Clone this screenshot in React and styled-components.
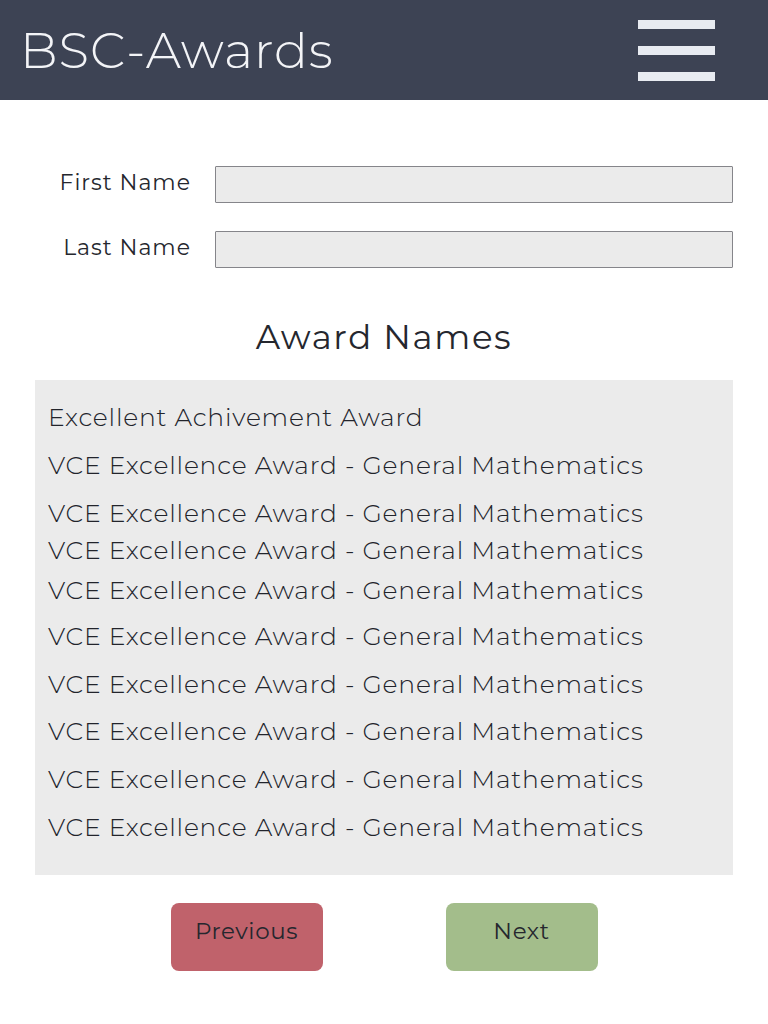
import React from 'react';
import styled, { createGlobalStyle } from 'styled-components';

const GlobalStyle = createGlobalStyle`
  body {
    margin: 0;
    background: #fff;
    font-family: Montserrat, "Open Sans", "Liberation Sans", sans-serif;
    color: #25272e;
  }
`;

const Header = styled.header`
  height: 100px;
  background: #3d4354;
  display: flex;
  align-items: center;
  justify-content: space-between;
  padding: 0 53px 0 20px;
`;

const Title = styled.h1`
  margin: 0;
  font-size: 50px;
  font-weight: 300;
  letter-spacing: 1px;
  color: #f3f4f7;
`;

const MenuButton = styled.button`
  display: flex;
  flex-direction: column;
  gap: 17px;
  width: 77px;
  padding: 0;
  border: none;
  background: none;
  cursor: pointer;
`;

const Bar = styled.span`
  display: block;
  height: 9px;
  background: #e8ebf1;
`;

const Form = styled.form`
  display: grid;
  grid-template-columns: 191px 1fr;
  column-gap: 24px;
  row-gap: 28px;
  align-items: center;
  padding: 66px 35px 0 0;
`;

const Label = styled.label`
  text-align: right;
  font-size: 22px;
  font-weight: 400;
  letter-spacing: 1px;
  padding-bottom: 4px;
`;

const Input = styled.input`
  box-sizing: border-box;
  height: 37px;
  width: 100%;
  background: #ebebeb;
  border: 1.5px solid #85858a;
  border-radius: 1px;
`;

const Heading = styled.h2`
  margin: 48px 0 22px;
  text-align: center;
  font-size: 34px;
  font-weight: 400;
  letter-spacing: 1.6px;
`;

const List = styled.ul`
  list-style: none;
  margin: 0 35px;
  height: 495px;
  box-sizing: border-box;
  padding: 22px 13px 0;
  background: #ebebeb;
`;

const Item = styled.li`
  margin-top: ${(p) => p.$space}px;
  font-size: 25px;
  line-height: 30px;
  font-weight: 300;
  letter-spacing: 0.8px;
  white-space: nowrap;
  color: #22242b;
`;

const Actions = styled.div`
  display: flex;
  justify-content: center;
  gap: 123px;
  margin-top: 28px;
`;

const ActionButton = styled.button`
  width: 152px;
  height: 68px;
  padding: 0 0 12px;
  border: none;
  border-radius: 8px;
  background: ${(p) => p.$color};
  color: #25272e;
  font-family: inherit;
  font-size: 23px;
  letter-spacing: 0.6px;
  cursor: pointer;
`;

const awards = [
  { name: 'Excellent Achivement Award', space: 0 },
  { name: 'VCE Excellence Award - General Mathematics', space: 18 },
  { name: 'VCE Excellence Award - General Mathematics', space: 18 },
  { name: 'VCE Excellence Award - General Mathematics', space: 7 },
  { name: 'VCE Excellence Award - General Mathematics', space: 10 },
  { name: 'VCE Excellence Award - General Mathematics', space: 16 },
  { name: 'VCE Excellence Award - General Mathematics', space: 18 },
  { name: 'VCE Excellence Award - General Mathematics', space: 17 },
  { name: 'VCE Excellence Award - General Mathematics', space: 18 },
  { name: 'VCE Excellence Award - General Mathematics', space: 18 },
];

export default function App() {
  return (
    <>
      <GlobalStyle />
      <Header>
        <Title>BSC-Awards</Title>
        <MenuButton aria-label="Menu">
          <Bar />
          <Bar />
          <Bar />
        </MenuButton>
      </Header>
      <Form>
        <Label htmlFor="first">First Name</Label>
        <Input id="first" />
        <Label htmlFor="last">Last Name</Label>
        <Input id="last" />
      </Form>
      <Heading>Award Names</Heading>
      <List>
        {awards.map((a, i) => (
          <Item key={i} $space={a.space}>{a.name}</Item>
        ))}
      </List>
      <Actions>
        <ActionButton $color="#c0626b">Previous</ActionButton>
        <ActionButton $color="#a3bd8b">Next</ActionButton>
      </Actions>
    </>
  );
}
